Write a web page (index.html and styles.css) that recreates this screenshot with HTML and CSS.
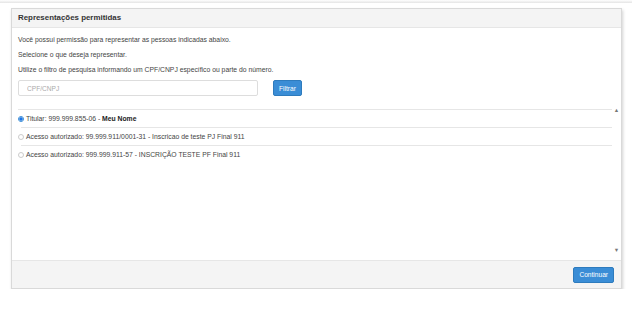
FILE: index.html
```html
<!DOCTYPE html>
<html lang="pt-BR">
<head>
  <meta charset="UTF-8">
  <title>Representações permitidas</title>
  <link rel="stylesheet" href="styles.css">
</head>
<body>
  <div class="topbar"></div>
  <div class="modal">
    <div class="modal-header">Representações permitidas</div>
    <div class="modal-body">
      <p>Você possui permissão para representar as pessoas indicadas abaixo.</p>
      <p>Selecione o que deseja representar.</p>
      <p>Utilize o filtro de pesquisa informando um CPF/CNPJ específico ou parte do número.</p>
      <div class="filter">
        <input type="text" class="filter-input" placeholder="CPF/CNPJ">
        <button type="button" class="btn">Filtrar</button>
      </div>
      <div class="list-wrap">
        <div class="list">
          <label class="item">
            <input type="radio" name="rep" checked>
            <span>Titular: 999.999.855-06 - <strong>Meu Nome</strong></span>
          </label>
          <label class="item">
            <input type="radio" name="rep">
            <span>Acesso autorizado: 99.999.911/0001-31 - Inscricao de teste PJ Final 911</span>
          </label>
          <label class="item">
            <input type="radio" name="rep">
            <span>Acesso autorizado: 999.999.911-57 - INSCRIÇÃO TESTE PF Final 911</span>
          </label>
        </div>
        <div class="scrollbar">
          <span class="arrow">&#9650;</span>
          <span class="arrow">&#9660;</span>
        </div>
      </div>
    </div>
    <div class="modal-footer">
      <button type="button" class="btn">Continuar</button>
    </div>
  </div>
</body>
</html>
```

FILE: styles.css
```css
body {
  margin: 0;
  font-family: "Liberation Sans", Arial, sans-serif;
  color: #444;
  background: #fff;
}
.topbar {
  height: 3px;
  background: linear-gradient(#fff, #e4e4e4);
}
.modal {
  width: 609px;
  margin: 5px 0 0 11px;
  border: 1px solid #d9d9d9;
  box-shadow: 1px 2px 3px rgba(0, 0, 0, 0.18);
  background: #fff;
}
.modal-header {
  height: 18px;
  line-height: 18px;
  padding: 0 6px;
  background: #f4f4f4;
  border-bottom: 1px solid #e6e6e6;
  font-size: 7.9px;
  font-weight: bold;
  color: #333;
}
.modal-body {
  padding: 7px 0 0 6px;
  font-size: 6.8px;
}
.modal-body p {
  margin: 0 0 6px;
  line-height: 9px;
}
.filter {
  display: flex;
  align-items: center;
  gap: 15px;
  margin-top: 1px;
}
.filter-input {
  width: 240px;
  height: 16px;
  box-sizing: border-box;
  border: 1px solid #ddd;
  border-radius: 2px;
  padding: 0 8px;
  font: inherit;
  font-size: 6.6px;
}
.filter-input::placeholder {
  color: #aaa;
}
.btn {
  height: 16px;
  padding: 0 5px;
  border: 1px solid #2e7bbd;
  border-radius: 2px;
  background: #3a8dd6;
  color: #fff;
  font: inherit;
  font-size: 6.6px;
}
.list-wrap {
  display: flex;
  margin-top: 13px;
  height: 144px;
  margin-bottom: 7px;
}
.list {
  flex: 1;
  border-top: 1px solid #e6e6e6;
}
.item {
  display: flex;
  align-items: center;
  gap: 2px;
  height: 17px;
  border-bottom: 1px solid #e6e6e6;
  margin-left: 3px;
}
.item:last-child {
  border-bottom: none;
}
.item input {
  appearance: none;
  width: 6px;
  height: 6px;
  margin: 0 0 0 -3px;
  border: 1px solid #ccc;
  border-radius: 50%;
  background: #fff;
}
.item input:checked {
  border-color: #3a8dd6;
  background: radial-gradient(#1a73e8 45%, #7fb0ec 60%, #fff 75%);
}
.item strong {
  color: #222;
}
.scrollbar {
  width: 9px;
  display: flex;
  flex-direction: column;
  justify-content: space-between;
  align-items: center;
  margin-top: -2px;
}
.arrow {
  font-size: 5.5px;
  color: #777;
}
.modal-footer {
  display: flex;
  justify-content: flex-end;
  align-items: center;
  height: 27px;
  padding: 0 7px;
  background: #f4f4f4;
  border-top: 1px solid #e6e6e6;
}
```
